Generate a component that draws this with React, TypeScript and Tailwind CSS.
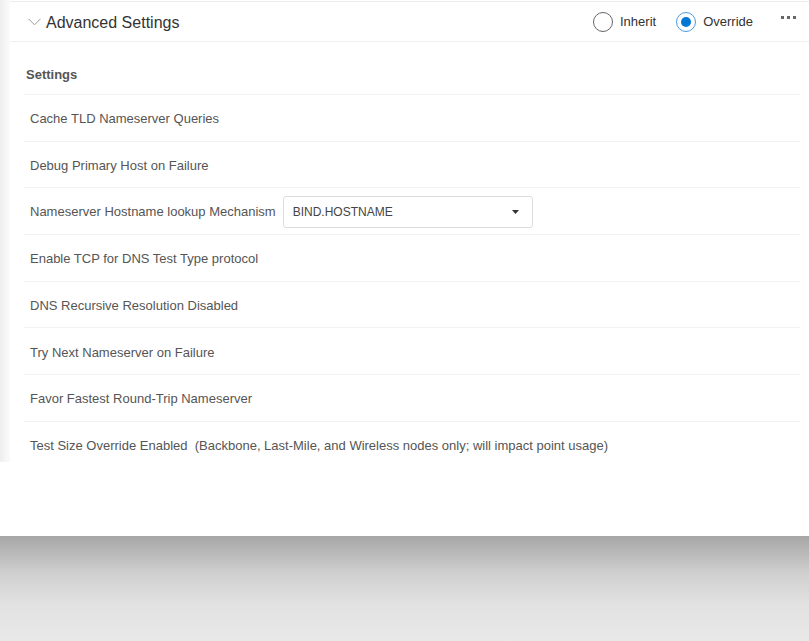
const rows: { label: string; select?: string }[] = [
  { label: 'Cache TLD Nameserver Queries' },
  { label: 'Debug Primary Host on Failure' },
  { label: 'Nameserver Hostname lookup Mechanism', select: 'BIND.HOSTNAME' },
  { label: 'Enable TCP for DNS Test Type protocol' },
  { label: 'DNS Recursive Resolution Disabled' },
  { label: 'Try Next Nameserver on Failure' },
  { label: 'Favor Fastest Round-Trip Nameserver' },
  {
    label:
      'Test Size Override Enabled\u00a0\u00a0(Backbone, Last-Mile, and Wireless nodes only; will impact point usage)',
  },
]

function Radio({ label, checked }: { label: string; checked?: boolean }) {
  return (
    <label className="flex items-center gap-[7px]">
      <span
        className={
          checked
            ? 'flex h-5 w-5 items-center justify-center rounded-full border border-[#4a9ae0]'
            : 'flex h-5 w-5 items-center justify-center rounded-full border border-[#666]'
        }
      >
        {checked && <span className="h-[10px] w-[10px] rounded-full bg-[#0078d4]" />}
      </span>
      <span className="text-[13px] text-[#333]">{label}</span>
    </label>
  )
}

export default function App() {
  return (
    <div className="flex h-[641px] w-[809px] flex-col overflow-hidden bg-white font-['Liberation_Sans',Arial,sans-serif]">
      <div className="flex h-[462px] shrink-0 overflow-hidden">
        <div className="w-[10px] shrink-0 bg-linear-to-r from-[#eeeeee] to-[#fbfbfb]" />
        <div className="mt-px flex flex-1 flex-col border-t border-[#ececec]">
          <div className="flex h-10 shrink-0 items-center border-b border-[#efefef] pl-[18px] pr-[13px]">
            <svg width="13" height="8" viewBox="0 0 13 8" className="mr-[5px] mt-px">
              <path d="M0.5 0.8 L6.5 6.8 L12.5 0.8" fill="none" stroke="#9a9a9a" strokeWidth="1" />
            </svg>
            <span className="pt-[2px] text-[16px] text-[#333]">Advanced Settings</span>
            <div className="ml-auto flex items-center gap-[20px] pt-px">
              <Radio label="Inherit" />
              <Radio label="Override" checked />
            </div>
            <div className="ml-[28px] mb-[8px] flex gap-[3px]">
              <span className="h-[3px] w-[3px] bg-[#666]" />
              <span className="h-[3px] w-[3px] bg-[#666]" />
              <span className="h-[3px] w-[3px] bg-[#666]" />
            </div>
          </div>
          <div className="pl-[14px] pr-[9px]">
            <div className="flex h-[52px] shrink-0 items-end pb-[10px] pl-[2px] text-[13px] font-bold text-[#555]">
              Settings
            </div>
            {rows.map((row) => (
              <div
                key={row.label}
                className="flex h-[46.7px] shrink-0 items-center border-t border-[#f2f2f2] pl-[6px] pt-[2px] text-[13px] text-[#555]"
              >
                <span className="whitespace-pre">{row.label}</span>
                {row.select && (
                  <div className="ml-[7px] flex h-[32px] w-[250px] items-center rounded-[3px] border border-[#dcdcdc] px-[9px] text-[12px] text-[#444]">
                    <span>{row.select}</span>
                    <svg width="7" height="4" viewBox="0 0 7 4" className="ml-auto mr-[4px]">
                      <path d="M0 0 L7 0 L3.5 4 Z" fill="#333" />
                    </svg>
                  </div>
                )}
              </div>
            ))}
          </div>
        </div>
      </div>
      <div className="h-[74px] shrink-0 bg-white" />
      <div className="flex-1 bg-[linear-gradient(to_bottom,#a6a6a6,#cfcfcf_35%,#e2e2e2_65%,#e8e8e8)]" />
    </div>
  )
}
